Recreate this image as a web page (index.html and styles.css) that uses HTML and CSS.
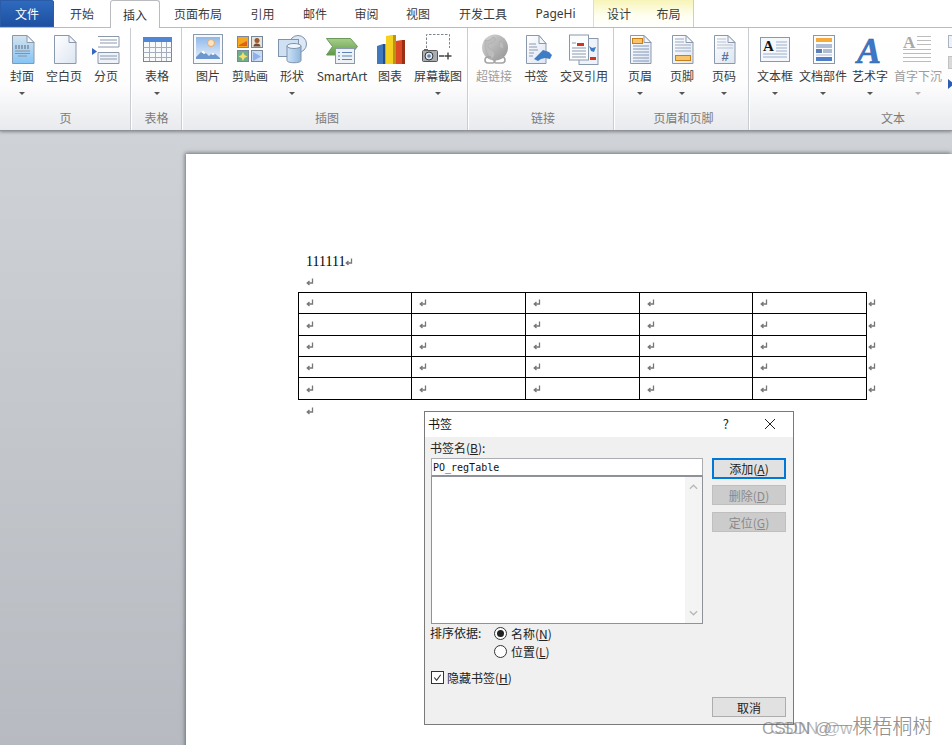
FILE: index.html
```html
<!DOCTYPE html>
<html lang="zh">
<head>
<meta charset="utf-8">
<title>书签</title>
<link rel="stylesheet" href="styles.css">
</head>
<body>
<div class="app">
  <nav class="tabs">
    <div class="tab file">文件</div>
    <div class="tab t56">开始</div>
    <div class="tab active">插入</div>
    <div class="tab t76">页面布局</div>
    <div class="tab t53">引用</div>
    <div class="tab t52">邮件</div>
    <div class="tab t51">审阅</div>
    <div class="tab t52">视图</div>
    <div class="tab t78">开发工具</div>
    <div class="tab t71">PageHi</div>
    <div class="context">
      <div class="tab t50">设计</div>
      <div class="tab t49">布局</div>
    </div>
  </nav>

  <section class="ribbon">
    <div class="group g-page">
      <div class="items">
        <div class="item w42">
          <svg class="ic" viewBox="0 0 32 32">
            <defs>
              <linearGradient id="gPaper" x1="0" y1="0" x2="1" y2="1"><stop offset="0" stop-color="#fff"/><stop offset="1" stop-color="#dde5f2"/></linearGradient>
              <linearGradient id="gBlue" x1="0" y1="0" x2="0" y2="1"><stop offset="0" stop-color="#d5e3ef"/><stop offset="1" stop-color="#84c4f6"/></linearGradient>
              <linearGradient id="gSky" x1="0" y1="0" x2="0" y2="1"><stop offset="0" stop-color="#8fb9ea"/><stop offset="1" stop-color="#e4effa"/></linearGradient>
              <linearGradient id="gCyl" x1="0" y1="0" x2="1" y2="0"><stop offset="0" stop-color="#cfe3f6"/><stop offset="1" stop-color="#8fb6dc"/></linearGradient>
              <linearGradient id="gGreen" x1="0" y1="0" x2="0" y2="1"><stop offset="0" stop-color="#a8cf8a"/><stop offset="1" stop-color="#5d9a47"/></linearGradient>
              <linearGradient id="gGlobe" x1="0" y1="0" x2="1" y2="1"><stop offset="0" stop-color="#d8d8d8"/><stop offset="1" stop-color="#929292"/></linearGradient>
            </defs>
            <path class="pg" d="M6.500 1.500H21l7 7v21H6.500z" fill="url(#gBlue)"/>
            <path class="fold" d="M21 1.500V8.500H28z"/>
            <path d="M9 12h15M9 14h15" stroke="#7e8a9e" stroke-width="1.300" stroke-dasharray="2 1"/>
            <path d="M9 17h15M9 19.500h15M12 22h9" stroke="#8b8f96" fill="none"/>
          </svg>
          <span class="lb">封面</span><i class="arrow"></i>
        </div>
        <div class="item w42">
          <svg class="ic" viewBox="0 0 32 32">
            <path class="pg" d="M6.500 1.500H21l7 7v21H6.500z" fill="url(#gPaper)"/>
            <path class="fold" d="M21 1.500V8.500H28z"/>
          </svg>
          <span class="lb">空白页</span>
        </div>
        <div class="item w42">
          <svg class="ic" viewBox="0 0 32 32">
            <path d="M2 14l5 3.500L2 21z" fill="#3565c0"/>
            <path d="M8 2.500h21v10.500H8" fill="#fff" stroke="#8a98ac"/>
            <path d="M8 18.500h21v11H8z" fill="#eef3fa" stroke="#8a98ac"/>
            <path d="M10 6h17M10 9h17M10 22h17M10 25h17" stroke="#8b99b0"/>
          </svg>
          <span class="lb">分页</span>
        </div>
      </div>
      <div class="gname">页</div>
    </div>

    <div class="group g-table">
      <div class="items">
        <div class="item w50">
          <svg class="ic" viewBox="0 0 32 32">
            <rect x="2.500" y="3.500" width="28" height="24" fill="#f8f9fb" stroke="#77849a"/>
            <rect x="2" y="3" width="29" height="5" fill="#4f87d6"/>
            <path d="M2.500 13.500h28M2.500 18.500h28M2.500 23.500h28M8.500 8v19M14.500 8v19M20.500 8v19M25.500 8v19" stroke="#a3adbb"/>
          </svg>
          <span class="lb">表格</span><i class="arrow"></i>
        </div>
      </div>
      <div class="gname">表格</div>
    </div>

    <div class="group g-ill">
      <div class="items">
        <div class="item w42">
          <svg class="ic" viewBox="0 0 32 32">
            <rect x="1.500" y="0.500" width="29" height="29" fill="#f6f8fb" stroke="#8c9aae"/>
            <rect x="4" y="3" width="24" height="22" fill="url(#gSky)"/>
            <circle cx="19" cy="9" r="3.500" fill="#fde3c0" stroke="#e8a868"/>
            <path d="M4 23l7-7 6 6 4-4 7 6v1H4z" fill="#6f97cf"/>
            <path d="M9 18l2-2 3 3-2 1zM21 18l2 2-2 1-2-1z" fill="#fff"/>
          </svg>
          <span class="lb">图片</span>
        </div>
        <div class="item w42">
          <svg class="ic" viewBox="0 0 32 32">
            <rect x="3.500" y="2.500" width="11" height="11" fill="#f7a81c" stroke="#78889c"/>
            <path d="M5 11l8-4v5H5z" fill="#e2601a"/>
            <rect x="17.500" y="2.500" width="11" height="11" fill="#e8e3da" stroke="#78889c"/>
            <circle cx="23" cy="6.500" r="2.500" fill="#9b5a32"/><path d="M19.500 12.500c0-4 7-4 7 0z" fill="#6d4b38"/>
            <rect x="3.500" y="16.500" width="11" height="11" fill="#6fae8a" stroke="#78889c"/>
            <path d="M9 18l1.500 3 3 1.500-3 1.500L9 27l-1.500-3-3-1.500 3-1.500z" fill="#f4e06a"/>
            <rect x="17.500" y="16.500" width="11" height="11" fill="#c9dcf4" stroke="#78889c"/>
            <path d="M19 18l8 4.500-8 4.500z" fill="#8fb0ea"/>
          </svg>
          <span class="lb">剪贴画</span>
        </div>
        <div class="item w42">
          <svg class="ic" viewBox="0 0 32 32">
            <circle cx="22" cy="10" r="8.500" fill="#dce8f6" stroke="#7f93ac"/>
            <rect x="2.500" y="5.500" width="20" height="17" fill="#cfe0f3" stroke="#7f93ac"/>
            <path d="M11 12v14.500c0 3 14 3 14 0V12z" fill="url(#gCyl)" stroke="#7f93ac"/>
            <ellipse cx="18" cy="12" rx="7" ry="2.500" fill="#eef5fc" stroke="#7f93ac"/>
          </svg>
          <span class="lb">形状</span><i class="arrow"></i>
        </div>
        <div class="item w58">
          <svg class="ic" viewBox="0 0 32 32">
            <path d="M0.500 4.500h24l7 8-7 8.500H0.500l6-8.500z" fill="url(#gGreen)" stroke="#6b9a58"/>
            <rect x="9.500" y="14.500" width="19" height="15" fill="#eef2f7" stroke="#8b98a8"/>
            <path d="M12 18.500h2M16 18.500h10M12 22h2M16 22h10M12 25.500h2M16 25.500h10" stroke="#5c83b8"/>
          </svg>
          <span class="lb">SmartArt</span>
        </div>
        <div class="item w38">
          <svg class="ic" viewBox="0 0 32 32">
            <path d="M3 12l6-2h2v20H3z" fill="#3f78bd"/>
            <path d="M9 10h2.500v20H9z" fill="#244f8b"/>
            <path d="M12 2l6-1h4v29H12z" fill="#f4d21f"/>
            <path d="M19 1h3v29h-3z" fill="#b99510"/>
            <path d="M22 7l6-1h3v24h-9z" fill="#db4a25"/>
            <path d="M28 6h3v24h-3z" fill="#9a2f14"/>
          </svg>
          <span class="lb">图表</span>
        </div>
        <div class="item w58">
          <svg class="ic" viewBox="0 0 32 32">
            <path d="M4.500 14V0.500h23V14" fill="none" stroke="#7d8590" stroke-dasharray="2.500 1.500"/>
            <rect x="0.500" y="16.500" width="15" height="11" rx="1" fill="#a9adb2" stroke="#555"/>
            <rect x="2" y="15" width="4" height="2" fill="#666"/>
            <circle cx="7" cy="22" r="4" fill="#dfe6ee" stroke="#333"/>
            <circle cx="7" cy="22" r="1.800" fill="#5d7fa8"/>
            <path d="M17 22h5M22.500 22h7M26 18.500v7" stroke="#444" stroke-width="1.400"/>
          </svg>
          <span class="lb">屏幕截图</span><i class="arrow"></i>
        </div>
      </div>
      <div class="gname">插图</div>
    </div>

    <div class="group g-link">
      <div class="items">
        <div class="item w42">
          <svg class="ic" viewBox="0 0 32 32">
            <circle cx="17" cy="13.500" r="13" fill="url(#gGlobe)"/>
            <path d="M7 6c3 1 6 0 8-3 3 1 3 3 1 5s-6 1-6 4 4 3 6 6-1 6-3 7c-3-3-7-10-6-19zM22 7c3 1 4 4 3 8l-4-2z" fill="#bcbcbc" stroke="#a6a6a6" stroke-width=".5"/>
            <path d="M13 23h-3a2.500 2.500 0 0 0 0 6h5a2.500 2.500 0 0 0 2-3M20 23h4a3 3 0 0 1 0 6h-6a2.500 2.500 0 0 1-2-3" fill="none" stroke="#a4a4a4" stroke-width="1.600"/>
          </svg>
          <span class="lb dim">超链接</span>
        </div>
        <div class="item w42">
          <svg class="ic" viewBox="0 0 32 32">
            <path class="pg" d="M6.500 1.500H19l7 8v20H6.500z" fill="url(#gPaper)"/>
            <path class="fold" d="M19 1.500V9.500H26z"/>
            <path d="M9 10h7M9 13h8M9 16h9M9 19h5M9 22h4" stroke="#8b99b0"/>
            <path d="M14 25l9-9 6 2 3 3-2 4-5-1-4 1-3 2z" fill="#3e7cc3"/>
          </svg>
          <span class="lb">书签</span>
        </div>
        <div class="item w54">
          <svg class="ic" viewBox="0 0 32 32">
            <rect x="11" y="4.500" width="19" height="26" fill="#eef3fa" stroke="#8a98ac"/>
            <rect x="1.500" y="1" width="19" height="25" fill="#fbfcfe" stroke="#8a98ac"/>
            <rect x="9" y="9" width="7" height="3" fill="#d4341c"/>
            <rect x="22" y="23" width="6" height="3" fill="#d4341c"/>
            <path d="M4 9h4M4 14h14M4 17h14M4 20h14M4 23h14" stroke="#8b99b0"/>
            <path d="M21 12l3 2 4-1-2 5-3-1z" fill="#3e7cc3"/>
          </svg>
          <span class="lb">交叉引用</span>
        </div>
      </div>
      <div class="gname">链接</div>
    </div>

    <div class="group g-head">
      <div class="items">
        <div class="item w42">
          <svg class="ic" viewBox="0 0 32 32">
            <path class="pg" d="M6.500 1.500H20l7 7v21H6.500z" fill="url(#gPaper)"/>
            <path class="fold" d="M20 1.500V8.500H27z"/>
            <rect x="8.500" y="4.500" width="10" height="5" fill="#f8c36a" stroke="#c77f18"/>
            <path d="M9 12h16M9 15h16M9 18h16M9 21h16M9 24h16M9 27h16" stroke="#8096b8"/>
          </svg>
          <span class="lb">页眉</span><i class="arrow"></i>
        </div>
        <div class="item w42">
          <svg class="ic" viewBox="0 0 32 32">
            <path class="pg" d="M6.500 1.500H20l7 7v21H6.500z" fill="url(#gPaper)"/>
            <path class="fold" d="M20 1.500V8.500H27z"/>
            <path d="M9 5h9M9 8h9M9 11h16M9 14h16M9 17h16" stroke="#9aa9c2"/>
            <rect x="9.500" y="21.500" width="15" height="5" fill="#f8c36a" stroke="#c77f18"/>
          </svg>
          <span class="lb">页脚</span><i class="arrow"></i>
        </div>
        <div class="item w42">
          <svg class="ic" viewBox="0 0 32 32">
            <path class="pg" d="M6.500 1.500H20l7 7v21H6.500z" fill="url(#gPaper)"/>
            <path class="fold" d="M20 1.500V8.500H27z"/>
            <path d="M9 5h9M9 8h9M9 11h16M9 14h16" stroke="#b6c1d2"/>
            <text x="17" y="27" class="hash">#</text>
          </svg>
          <span class="lb">页码</span><i class="arrow"></i>
        </div>
      </div>
      <div class="gname">页眉和页脚</div>
    </div>

    <div class="group g-text">
      <div class="items">
        <div class="item w50">
          <svg class="ic" viewBox="0 0 32 32">
            <rect x="1.500" y="3.500" width="29" height="24" fill="#f4f7fb" stroke="#8a98ac"/>
            <text x="4" y="17" class="serifA">A</text>
            <path d="M17 8h11M17 11h11M17 14h11M17 17h11M4 20h24M4 23h24" stroke="#9db0cc"/>
          </svg>
          <span class="lb">文本框</span><i class="arrow"></i>
        </div>
        <div class="item w46">
          <svg class="ic" viewBox="0 0 32 32">
            <rect x="6.500" y="1.500" width="21" height="28" fill="#fbfcfe" stroke="#8a98ac"/>
            <rect x="9" y="4" width="16" height="4" fill="#f7a93a"/>
            <rect x="9" y="10" width="16" height="4" fill="#aebdd4"/>
            <rect x="9" y="15" width="6" height="4" fill="#5c7fb5"/>
            <rect x="16" y="15" width="9" height="4" fill="#aebdd4"/>
            <path d="M9 21h16" stroke="#aebdd4"/>
            <rect x="9" y="23" width="16" height="4" fill="#4f7ec9"/>
          </svg>
          <span class="lb">文档部件</span><i class="arrow"></i>
        </div>
        <div class="item w48">
          <svg class="ic" viewBox="0 0 32 32">
            <text x="15" y="29" class="artA">A</text>
          </svg>
          <span class="lb">艺术字</span><i class="arrow"></i>
        </div>
        <div class="item w48">
          <svg class="ic" viewBox="0 0 32 32">
            <text x="1" y="14" class="dropA">A</text>
            <path d="M15 2.500h14M15 6.500h14M15 10.500h14M1 15.500h28M1 19.500h28M1 23.500h28M1 27.500h28" stroke="#bcbcbc"/>
          </svg>
          <span class="lb dim">首字下沉</span><i class="arrow light"></i>
        </div>
        <div class="mini">
          <span class="m1"></span>
          <span class="m2"></span>
          <span class="m3"></span>
        </div>
      </div>
      <div class="gname">文本</div>
    </div>
  </section>

  <main class="workspace">
    <article class="page">
      <p class="para p1"><span class="num">111111</span><svg class="ret" viewBox="0 0 8 8"><path d="M6.500 0.500v4.500H1.500M3.500 3L1.200 5l2.300 2"/></svg></p>
      <p class="para p2"><svg class="ret" viewBox="0 0 8 8"><path d="M6.500 0.500v4.500H1.500M3.500 3L1.200 5l2.300 2"/></svg></p>
      <table class="doc">
        <colgroup><col class="c1"><col class="c2"><col class="c3"><col class="c4"><col class="c5"><col class="c6"></colgroup>
        <tbody id="rows"></tbody>
      </table>
      <p class="para p3"><svg class="ret" viewBox="0 0 8 8"><path d="M6.500 0.500v4.500H1.500M3.500 3L1.200 5l2.300 2"/></svg></p>
    </article>
  </main>

  <div class="dialog">
    <header class="dtitle">
      <span class="dname">书签</span>
      <span class="help">?</span>
      <svg class="close" viewBox="0 0 12 12"><path d="M1 1l10 10M11 1L1 11"/></svg>
    </header>
    <div class="dbody">
      <div class="dleft">
        <div class="fieldlabel">书签名(<u>B</u>):</div>
        <div class="input">PO_regTable</div>
        <div class="list">
          <div class="scroll">
            <svg class="chev" viewBox="0 0 10 6"><path d="M1 5l4-4 4 4"/></svg>
            <svg class="chev" viewBox="0 0 10 6"><path d="M1 1l4 4 4-4"/></svg>
          </div>
        </div>
        <div class="sort">
          <span class="sortlabel">排序依据:</span>
          <div class="radios">
            <label class="radio"><span class="dot on"></span>名称(<u>N</u>)</label>
            <label class="radio"><span class="dot"></span>位置(<u>L</u>)</label>
          </div>
        </div>
        <label class="check"><span class="box"><svg viewBox="0 0 12 12"><path d="M2.500 6l2.500 3 4.500-6"/></svg></span>隐藏书签(<u>H</u>)</label>
      </div>
      <div class="dright">
        <button class="btn primary">添加(<u>A</u>)</button>
        <button class="btn off">删除(<u>D</u>)</button>
        <button class="btn off">定位(<u>G</u>)</button>
        <button class="btn cancel">取消</button>
      </div>
    </div>
  </div>

  <div class="mark">
    <span class="mk a">CSDN @<span class="big">一棵梧桐树</span></span>
    <span class="mk b">CSDN @w<span class="big">棵梧桐树</span></span>
  </div>
</div>
<script src="table.js"></script>
</body>
</html>
```

FILE: table.js
```js
var ret = '<svg class="ret" viewBox="0 0 8 8"><path d="M6.500 0.500v4.500H1.500M3.500 3L1.200 5l2.300 2"/></svg>';
var html = '';
for (var r = 0; r < 5; r++) {
  html += '<tr class="r' + r + '">';
  for (var c = 0; c < 5; c++) html += '<td>' + ret + '</td>';
  html += '<td class="end">' + ret + '</td></tr>';
}
document.getElementById('rows').innerHTML = html;
```

FILE: styles.css
```css
* { box-sizing: border-box; }
html, body { margin: 0; height: 100%; overflow: hidden; background: #fff; }
body { font-family: "Noto Sans CJK SC", "Liberation Sans", sans-serif; font-size: 12px; color: #333; }
p { margin: 0; }

.app { position: relative; width: 952px; height: 745px; overflow: hidden; display: flex; flex-direction: column; }

/* tabs */
.tabs { height: 28px; flex: none; display: flex; background: #fff; border-bottom: 1px solid #b9bbbe; position: relative; z-index: 2; }
.tab { height: 27px; display: flex; align-items: center; justify-content: center; font-size: 12px; color: #3b3b3b; flex: none; padding-bottom: 1px; }
.file { width: 54px; background: linear-gradient(#2f6bc0, #1d4f9f); color: #fff; border-radius: 0 3px 0 0; box-shadow: inset 0 0 0 1px #2b5ca8; }
.active { width: 50px; height: 28px; background: #fff; border: 1px solid #b9bbbe; border-bottom: 0; border-radius: 3px 3px 0 0; color: #333; }
.t49 { width: 49px; } .t50 { width: 50px; } .t51 { width: 51px; } .t52 { width: 52px; } .t53 { width: 53px; }
.t56 { width: 56px; } .t71 { width: 71px; padding-right: 4px; font-family: "Noto Sans", sans-serif; } .t76 { width: 76px; } .t78 { width: 78px; }
.context { display: flex; background: linear-gradient(#f7f4b8, #fffff2 60%, #fff); border-left: 1px solid #e4e2a8; border-right: 1px solid #d9d682; height: 27px; }

/* ribbon */
.ribbon { height: 102px; flex: none; display: flex; background: linear-gradient(#fff, #fdfdfe 55%, #e8eaed); box-shadow: 0 1px 0 #8f9296, 0 2px 3px rgba(70,75,85,.55); position: relative; z-index: 1; }
.group { display: flex; flex-direction: column; flex: none; border-right: 1px solid #c9ccd0; box-shadow: 1px 0 0 #fff; margin-right: 1px; }
.g-page { width: 131px; padding-left: 1px; }
.g-table { width: 50px; }
.g-ill { width: 285px; padding-left: 4px; }
.g-link { width: 145px; padding-left: 4px; }
.g-head { width: 134px; padding-left: 4px; }
.g-text { width: 286px; border-right: 0; margin-right: 0; }
.items { display: flex; height: 82px; }
.item { display: flex; flex-direction: column; align-items: center; padding-top: 6px; flex: none; }
.w38 { width: 38px; } .w42 { width: 42px; } .w46 { width: 46px; } .w48 { width: 48px; } .w50 { width: 50px; } .w54 { width: 54px; } .w58 { width: 58px; }
.ic { width: 32px; height: 32px; flex: none; overflow: visible; }
.lb { margin-top: 1px; height: 18px; line-height: 18px; white-space: nowrap; color: #3a3a3a; font-size: 12px; }
.lb.dim { color: #9c9c9c; }
.arrow { margin-top: 7px; width: 0; height: 0; border-left: 3px solid transparent; border-right: 3px solid transparent; border-top: 3px solid #555; }
.arrow.light { border-top-color: #b5b5b5; }
.gname { text-align: center; color: #7b7b7b; font-size: 12px; line-height: 16px; height: 16px; }
.pg { stroke: #8a98ac; }
.fold { fill: #f4f6fa; stroke: #8a98ac; }
.hash { font: bold 13px "Liberation Sans", sans-serif; fill: #5b7199; text-anchor: middle; }
.serifA { font: bold 15px "Liberation Serif", serif; fill: #111; }
.artA { font: italic bold 36px "Liberation Serif", serif; fill: #3c78c8; stroke: #2d5a9c; stroke-width: .5; text-anchor: middle; }
.dropA { font: bold 17px "Liberation Serif", serif; fill: #a8a8a8; }
.mini { display: flex; flex-direction: column; margin-left: 6px; padding-top: 7px; }
.m1, .m2 { display: block; width: 12px; height: 13px; border: 1px solid #aab3c0; background: #eef1f5; margin-bottom: 8px; }
.m2 { background: #d9d9d9; border-color: #c2c2c2; }
.m3 { display: block; width: 0; height: 0; border-top: 5px solid transparent; border-bottom: 5px solid transparent; border-left: 6px solid #2c5db3; margin-top: 2px; }

/* document */
.workspace { flex: 1; min-height: 0; overflow: hidden; background: linear-gradient(#cfd2d6, #b7bbc1); padding: 24px 0 0 186px; }
.page { height: 800px; background: #fff; box-shadow: -1px -1px 4px rgba(70,75,85,.7); padding: 97px 0 0 120px; }
.para { display: flex; align-items: center; }
.p1 { height: 21px; }
.p2 { height: 20px; }
.p3 { height: 22px; }
.num { font-family: "Liberation Serif", serif; font-size: 14px; color: #000; }
.ret { width: 8px; height: 8px; flex: none; fill: none; stroke: #777; stroke-width: 1.300; display: block; }
.doc { margin-left: -8px; width: 581px; table-layout: fixed; border-collapse: collapse; }
.doc td { border: 1px solid #000; padding: 0 0 0 7px; height: 21px; }
.doc .r1 td, .doc .r4 td { height: 22px; }
.doc td.end { border: 0; padding-left: 1px; }
.c1 { width: 113px; } .c2, .c3 { width: 114px; } .c4 { width: 113px; } .c5 { width: 114px; } .c6 { width: 13px; }

/* dialog */
.dialog { position: absolute; left: 424px; top: 411px; width: 370px; height: 314px; border: 1px solid #7a7a7a; background: #f0f0f0; display: flex; flex-direction: column; z-index: 3; }
.dtitle { height: 25px; flex: none; background: #fff; display: flex; align-items: center; padding: 0 17px 2px 3px; color: #111; }
.dname { flex: 1; }
.help { margin-right: 35px; font-size: 13px; color: #222; }
.close { width: 12px; height: 12px; fill: none; stroke: #222; stroke-width: 1; }
.dbody { flex: 1; min-height: 0; display: flex; gap: 9px; padding: 0 7px 7px 5px; }
.dleft { width: 273px; flex: none; }
.fieldlabel { height: 21px; line-height: 22px; color: #222; }
.input { margin-left: 1px; height: 18px; background: #fff; border: 1px solid #abadb3; border-bottom-color: #8e9096; font: 10px/17px "DejaVu Sans Mono", monospace; padding-left: 1px; color: #111; }
.list { margin-left: 1px; height: 148px; background: #fff; border: 1px solid #8f9299; display: flex; justify-content: flex-end; }
.scroll { width: 17px; background: #f4f4f4; display: flex; flex-direction: column; justify-content: space-between; align-items: center; padding: 7px 0; }
.chev { width: 9px; height: 6px; fill: none; stroke: #b8b8b8; stroke-width: 1.500; }
.sort { display: flex; }
.sortlabel { width: 64px; flex: none; line-height: 18px; color: #222; }
.radios { display: flex; flex-direction: column; }
.radio { display: flex; align-items: center; height: 18px; color: #222; }
.dot { width: 13px; height: 13px; border-radius: 50%; border: 1px solid #333; background: #fff; margin-right: 4px; display: flex; align-items: center; justify-content: center; }
.dot.on::after { content: ""; width: 7px; height: 7px; border-radius: 50%; background: #222; }
.check { display: flex; align-items: center; height: 18px; margin: 8px 0 0 1px; color: #222; }
.box { width: 13px; height: 13px; background: #fff; border: 1px solid #333; margin-right: 3px; display: block; }
.box svg { display: block; width: 11px; height: 11px; fill: none; stroke: #333; stroke-width: 1.200; }
.dright { width: 74px; flex: none; display: flex; flex-direction: column; padding-top: 21px; }
.btn { font: 12px "Noto Sans CJK SC", sans-serif; width: 74px; height: 20px; padding: 0; background: #e1e1e1; border: 1px solid #adadad; color: #222; display: block; }
.primary { height: 21px; border: 2px solid #0078d7; margin-bottom: 6px; }
.off { background: #ccc; border-color: #bfbfbf; color: #8a8a8a; margin-bottom: 7px; }
.cancel { margin-top: auto; }

/* watermark */
.mark { position: absolute; left: 762px; top: 714px; width: 190px; height: 26px; z-index: 4; }
.mk { position: absolute; top: 0; left: 0; font-family: "Liberation Sans", "Noto Sans CJK SC", sans-serif; font-size: 17px; line-height: 26px; color: rgba(100,100,100,.6); white-space: nowrap; font-weight: 300; }
.mk.b { left: 8px; color: rgba(130,130,130,.55); }
.big { font-size: 20px; }
```
